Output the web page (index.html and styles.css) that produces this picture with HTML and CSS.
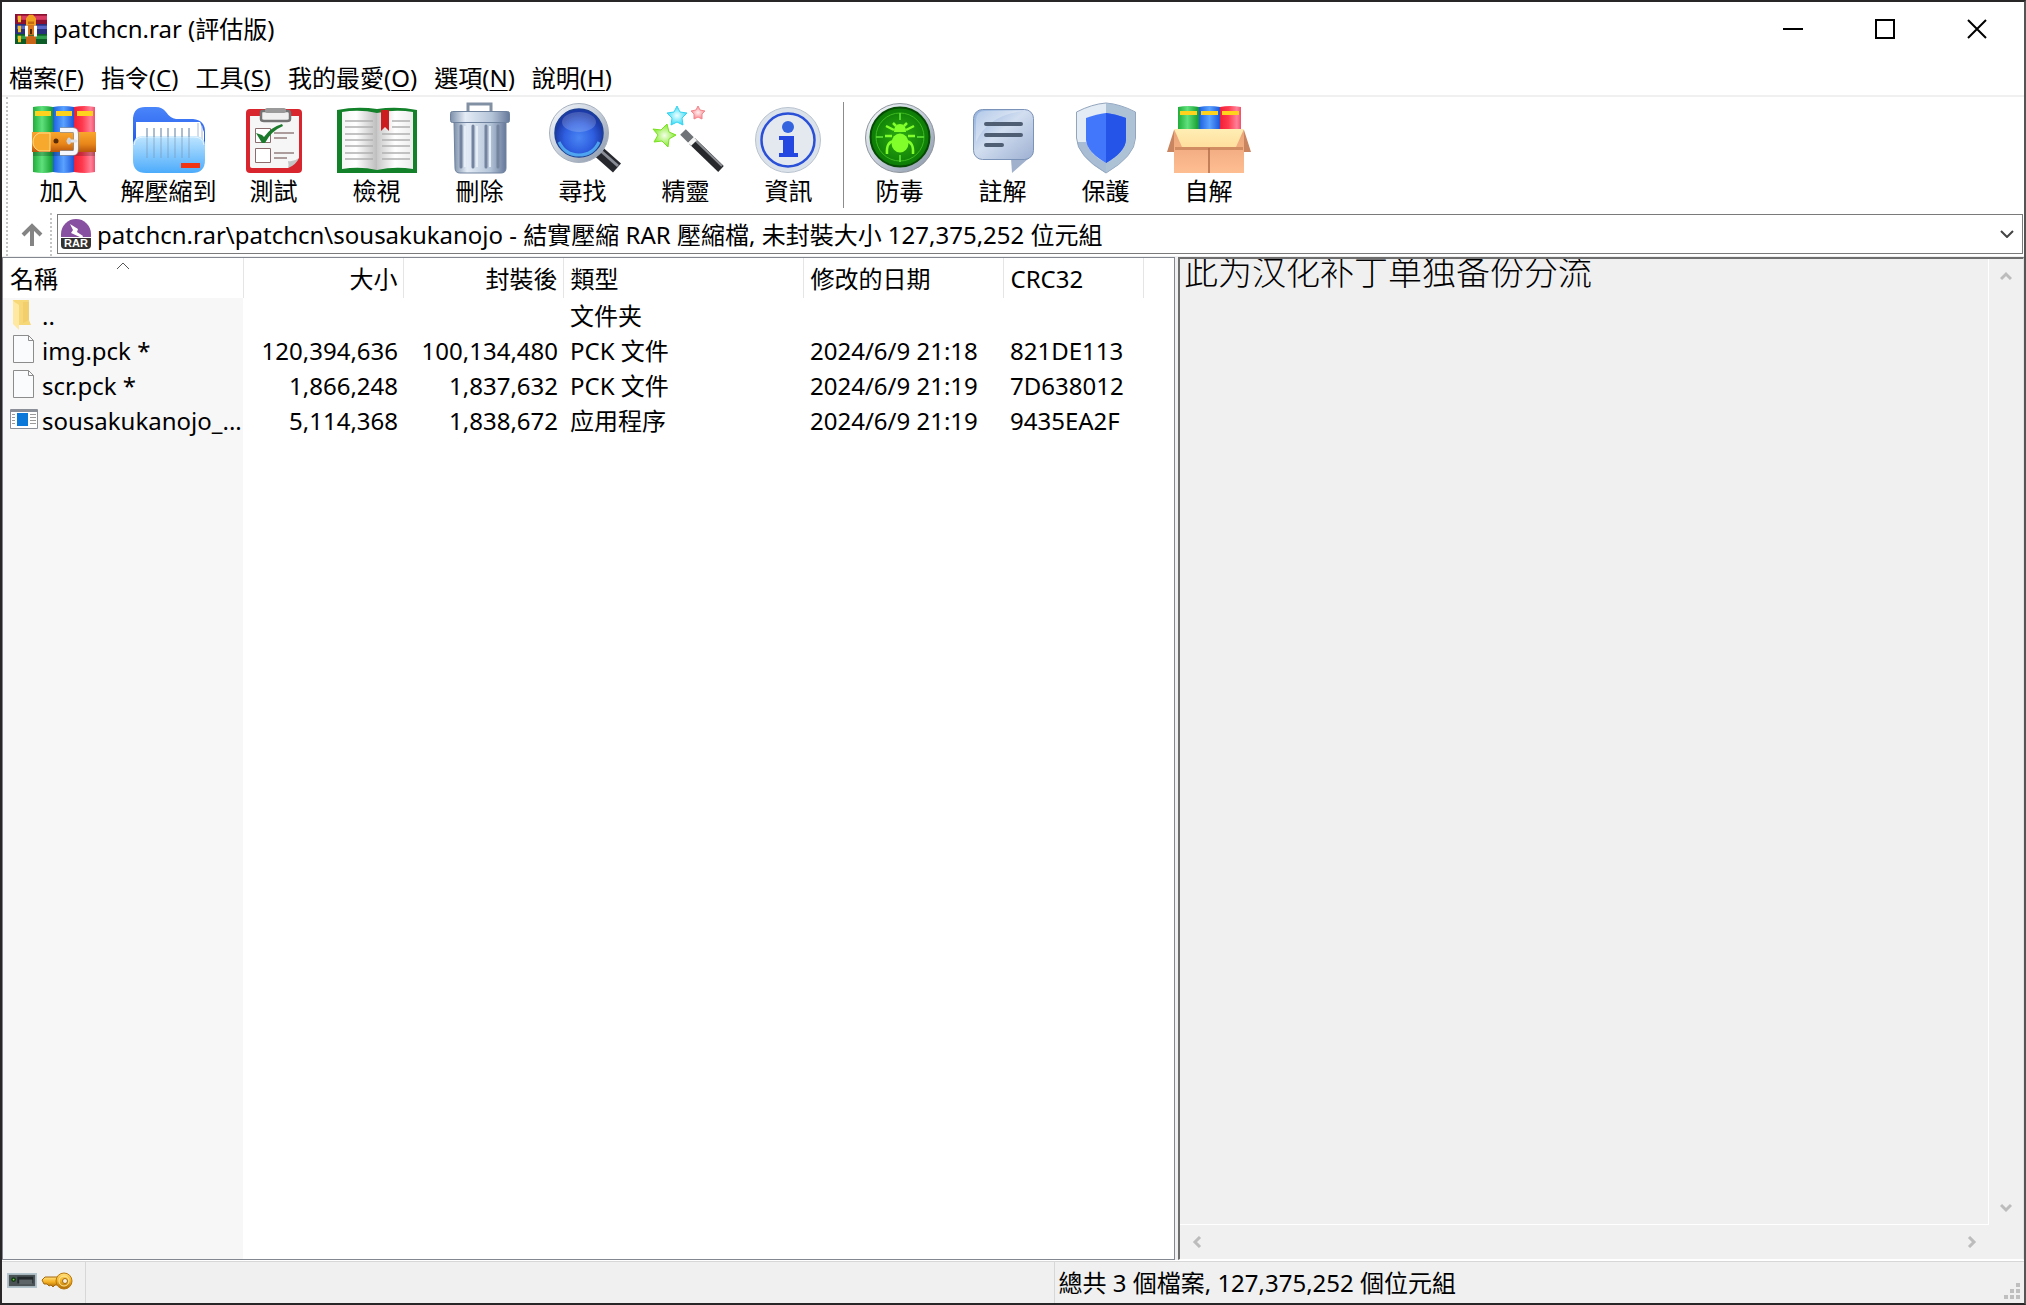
FILE: index.html
```html
<!DOCTYPE html>
<html lang="zh-Hant">
<head>
<meta charset="utf-8">
<title>patchcn.rar (評估版)</title>
<link rel="stylesheet" href="styles.css">
</head>
<body>
<svg class="defs" aria-hidden="true">
  <defs>
    <linearGradient id="green"><stop offset="0" stop-color="#1fae3a"/><stop offset=".45" stop-color="#5fe07c"/><stop offset="1" stop-color="#119a2c"/></linearGradient>
    <linearGradient id="blue"><stop offset="0" stop-color="#1b5fe0"/><stop offset=".5" stop-color="#5aa2ff"/><stop offset="1" stop-color="#1c55d8"/></linearGradient>
    <linearGradient id="red"><stop offset="0" stop-color="#f01f38"/><stop offset=".4" stop-color="#ff3a4e"/><stop offset=".8" stop-color="#ff8098"/><stop offset="1" stop-color="#f0506c"/></linearGradient>
    <linearGradient id="belt" x2="0" y2="1"><stop offset="0" stop-color="#f9a62c"/><stop offset=".6" stop-color="#e8861a"/><stop offset="1" stop-color="#b8560c"/></linearGradient>
    <linearGradient id="back" x2="0" y2="1"><stop offset="0" stop-color="#4a86fa"/><stop offset="1" stop-color="#1a4fe8"/></linearGradient>
    <linearGradient id="front" x2="0" y2="1"><stop offset="0" stop-color="#bfe6ff"/><stop offset="1" stop-color="#4cabfb"/></linearGradient>
    <linearGradient id="metal"><stop offset="0" stop-color="#7d90aa"/><stop offset=".25" stop-color="#e4ecf6"/><stop offset=".7" stop-color="#b4c4d8"/><stop offset="1" stop-color="#66799a"/></linearGradient>
    <linearGradient id="page" x2="1"><stop offset="0" stop-color="#f4f4f4"/><stop offset=".4" stop-color="#ffffff"/><stop offset="1" stop-color="#bdbdbd"/></linearGradient>
    <linearGradient id="page2" x2="1"><stop offset="0" stop-color="#c8c8c8"/><stop offset=".5" stop-color="#ffffff"/><stop offset="1" stop-color="#ececec"/></linearGradient>
    <linearGradient id="steel" x2="1" y2="1"><stop offset="0" stop-color="#fafcff"/><stop offset=".5" stop-color="#c3ccd8"/><stop offset="1" stop-color="#8793a6"/></linearGradient>
    <radialGradient id="lens" cy=".6"><stop offset="0" stop-color="#4a86f4"/><stop offset=".6" stop-color="#2f5fe0"/><stop offset="1" stop-color="#1c3aa8"/></radialGradient>
    <radialGradient id="radar"><stop offset="0" stop-color="#2fae12"/><stop offset="1" stop-color="#0b7a06"/></radialGradient>
    <linearGradient id="bubble" x2="1" y2="1"><stop offset="0" stop-color="#8fb0de"/><stop offset=".45" stop-color="#d2def0"/><stop offset="1" stop-color="#9db0d2"/></linearGradient>
    <linearGradient id="carton" x2="0" y2="1"><stop offset="0" stop-color="#e9a376"/><stop offset="1" stop-color="#ffbd92"/></linearGradient>
    <linearGradient id="flap" x2="0" y2="1"><stop offset="0" stop-color="#ffeeb4"/><stop offset="1" stop-color="#ffdf9e"/></linearGradient>
    <linearGradient id="gold" x2="0" y2="1"><stop offset="0" stop-color="#ffe07a"/><stop offset=".5" stop-color="#f5b021"/><stop offset="1" stop-color="#a86606"/></linearGradient>
    <radialGradient id="gs"><stop offset="0" stop-color="#f4ffe8"/><stop offset="1" stop-color="#84ea2c"/></radialGradient>
    <radialGradient id="cs"><stop offset="0" stop-color="#eeffff"/><stop offset="1" stop-color="#3cdcf6"/></radialGradient>
    <radialGradient id="ps"><stop offset="0" stop-color="#fff0f0"/><stop offset="1" stop-color="#f98a92"/></radialGradient>
  </defs>
</svg>

<header class="titlebar">
  <svg class="app-icon" viewBox="0 0 32 36" preserveAspectRatio="none" aria-hidden="true">
    <path fill="#8c1030" d="M0 0h32v12H0z"/><path fill="#d83a62" d="M2 2h30v5H2z"/>
    <path fill="#28307e" d="M0 12h32v12H0z"/><path fill="#5a66c8" d="M2 14h30v4H2z"/>
    <path fill="#0c5c28" d="M0 24h32v12H0z"/><path fill="#2f9c4c" d="M2 26h30v4H2z"/>
    <path fill="#f0c020" d="M3 2h3v8H3zM3 14h3v8H3zM3 26h3v8H3z"/>
    <path fill="#c86418" d="M11 26h10v10H11z"/>
    <path fill="#f0a020" d="M11 5l3-4h4l3 4v9H11z"/><path fill="#c46a10" d="M13 9h6v3h-6z"/>
    <path fill="#fff" d="M10 14h12v13h-3v-8h-6v8h-3z"/><path fill="#d87420" d="M13 13h6v12h-6z"/><path fill="#4a2808" d="M15 18h2v6h-2z"/>
  </svg>
  <h1 class="title">patchcn.rar (評估版)</h1>
  <div class="window-buttons">
    <button type="button" aria-label="最小化"><svg viewBox="0 0 20 20"><path d="M0 10h20"/></svg></button>
    <button type="button" aria-label="最大化"><svg viewBox="0 0 20 20"><path d="M1 1h18v18H1z"/></svg></button>
    <button type="button" aria-label="關閉"><svg viewBox="0 0 20 20"><path d="M1 1l18 18M19 1L1 19"/></svg></button>
  </div>
</header>

<nav class="menubar">
  <button type="button">檔案(<u>F</u>)</button>
  <button type="button">指令(<u>C</u>)</button>
  <button type="button">工具(<u>S</u>)</button>
  <button type="button">我的最愛(<u>O</u>)</button>
  <button type="button">選項(<u>N</u>)</button>
  <button type="button">說明(<u>H</u>)</button>
</nav>

<div class="rebar">
  <div class="toolbar" role="toolbar">
    <button type="button" class="tool">
      <svg viewBox="0 0 83 72">
        <path fill="url(#green)" d="M11 5q10-2 20 0v65q-10 2-20 0z"/>
        <path fill="url(#blue)" d="M31 5q10-2 21 0v65q-10 2-21 0z"/>
        <path fill="url(#red)" d="M52 5q10-2 21 0v65q-10 2-21 0z"/>
        <path fill="#ffd21e" d="M13 9h16v5H13zM34 9h16v5H34zM55 9h16v5H55z"/>
        <path fill="#000" opacity=".2" d="M11 50h62v4H11z"/>
        <path fill="url(#belt)" d="M10 30h64v20H10z"/>
        <path fill="#f7a92e" stroke="#ffe08a" stroke-width="1" d="M28 31H17q-6 3-6 9t6 9h11z"/>
        <circle cx="34" cy="39" r="2.500" fill="#5a2c06"/>
        <path fill="none" stroke="#8c929c" stroke-width="5.500" d="M38 28h13q3 0 3 4v15q0 4-3 4H38"/>
        <path fill="none" stroke="#f6f7fa" stroke-width="4" d="M38 28h13q3 0 3 4v15q0 4-3 4H38"/>
        <path stroke="#dfe4ec" stroke-width="3" stroke-linecap="round" d="M46 39h8"/><ellipse cx="47" cy="39" rx="2" ry="3.500" fill="#cdd4df"/>
      </svg>
      <span>加入</span>
    </button>
    <button type="button" class="tool wide">
      <svg viewBox="0 0 83 72">
        <path fill="url(#back)" d="M6 16Q7 5 18 5h11q6 0 10 5 4 6 10 7h17q12 1 12 13v20H6z"/>
        <path fill="#fff" d="M9 20h64l4 10v20H9z"/><path fill="none" stroke="#a8bad8" d="M71 21v20M75 24v20"/>
        <path fill="url(#front)" d="M6 44q0-10 10-10h52q10 0 10 10v14q0 13-13 13H19Q6 71 6 58z"/>
        <path fill="none" stroke="#e4f5ff" d="M7 43q1-8 10-8h50q9 0 10 8"/>
        <path stroke="#7790b0" stroke-width="2" opacity=".6" d="M20 26v9M27 26v9M34 26v9M41 26v9M48 26v9M55 26v9M62 26v9"/>
        <path stroke="#7790b0" stroke-width="2" opacity=".3" d="M20 35v21M27 35v21M34 35v21M41 35v21M48 35v21M55 35v21M62 35v21"/>
        <path fill="#f03414" d="M54 61h19v5H54z"/>
      </svg>
      <span>解壓縮到</span>
    </button>
    <button type="button" class="tool">
      <svg viewBox="0 0 83 72">
        <rect x="14" y="7" width="56" height="64" rx="4" fill="#d9262e"/>
        <path fill="#f6f6f6" d="M18 14h49v42l-11 10H20q-2 0-2-2z"/><path fill="#c4c4c4" d="M67 56q-5 4-11 3 1 4 0 7 8-3 11-10z"/>
        <path fill="#f0f0f0" stroke="#747474" stroke-width="2.500" d="M30 9h26q2 0 2 3v5q0 2-3 2H32q-3 0-3-2v-5q0-3 1-3z"/><rect x="33" y="6" width="21" height="5" rx="2" fill="#9a9a9a"/>
        <path fill="#fff" stroke="#8c6c6c" d="M23.500 26.500h15v14h-15zM23.500 46.500h15v14h-15z"/>
        <path stroke="#957f7f" stroke-width="1.300" d="M42 31h20M42 36h13M42 51h20M42 56h13"/>
        <path fill="#1c7a2c" d="M24 31l6 2 2 2q7-10 18-13l1 2q-12 5-18 17h-3z"/>
      </svg>
      <span>測試</span>
    </button>
    <button type="button" class="tool">
      <svg viewBox="0 0 83 72">
        <path fill="#13812a" d="M2 8q20-4 40-1 20-3 40 1v63H2z"/>
        <path fill="url(#page)" d="M7 10q18-3 35 1v57q-17-4-35-1z"/><path fill="url(#page2)" d="M42 11q18-4 36-1v57q-18-3-36 1z"/>
        <path fill="none" stroke="#b0b0b0" stroke-width="1.500" d="M10 19h28M10 25h28M10 32h28M10 38h28M10 44h28M10 51h28M10 57h28M57 19h18M57 25h18M47 32h28M47 38h28M47 44h28M47 51h28M47 57h28"/>
        <path fill="#cc1c20" d="M46 8h8v21l-4-4-4 4z"/>
      </svg>
      <span>檢視</span>
    </button>
    <button type="button" class="tool">
      <svg viewBox="0 0 83 72">
        <path fill="none" stroke="#8290a4" stroke-width="3" d="M30 10V2h23v8"/>
        <path fill="url(#metal)" stroke="#6f829e" d="M16 20h52v46q0 5-5 5H22q-5 0-5-5z"/>
        <path stroke="#74849e" stroke-width="3" stroke-linecap="round" d="M23 24v41M35 24v41M48 24v41M60 24v41"/>
        <path stroke="#e8eef6" stroke-width="2" d="M27 24v41M39 24v41M52 24v41"/>
        <rect x="12.500" y="9.500" width="59" height="11" rx="2" fill="url(#metal)" stroke="#6f829e"/>
      </svg>
      <span>刪除</span>
    </button>
    <button type="button" class="tool">
      <svg viewBox="0 0 83 72">
        <path stroke="#26282e" stroke-width="12" d="M58 50l18 16"/><path stroke="#8a8d96" stroke-width="3" d="M60 49l17 15"/><path stroke="#b8c0cc" stroke-width="9" d="M54 47l4 4"/>
        <circle cx="38" cy="31" r="29.500" fill="url(#steel)" stroke="#a6b0be"/>
        <circle cx="38" cy="31" r="24" fill="url(#lens)" stroke="#1b3f96" stroke-width="1.500"/>
        <ellipse cx="38" cy="20" rx="17" ry="10" fill="#fff" opacity=".18"/>
        <path fill="none" stroke="#60c8ff" stroke-width="3" opacity=".7" d="M18 40q6 13 20 13t20-13"/>
      </svg>
      <span>尋找</span>
    </button>
    <button type="button" class="tool">
      <svg viewBox="0 0 83 72">
        <path fill="url(#gs)" stroke="#78e020" d="M23 22l2 8 7 3-7 4-1 8-6-6-8 1 4-7-5-6 8 1z"/>
        <path fill="url(#cs)" stroke="#34d4f0" d="M33 4l3 6 7 1-5 5 1 7-6-3-6 3 1-7-5-5 7-1z"/>
        <path fill="url(#ps)" stroke="#f4868e" d="M54 4l2 4 5 1-3 3v5l-4-2-4 2v-5l-3-3 5-1z"/>
        <path stroke="#26282b" stroke-width="8" d="M48 39l29 28"/><path stroke="#8b8e92" stroke-width="2" d="M50 37l28 27"/>
        <path stroke="#707377" stroke-width="8" d="M39 30l8 8"/><path stroke="#f4f4f4" stroke-width="8" d="M47 38l3 3"/>
      </svg>
      <span>精靈</span>
    </button>
    <button type="button" class="tool">
      <svg viewBox="0 0 83 72">
        <circle cx="41" cy="38" r="32.500" fill="#dbe2ea" stroke="#b9c3cf"/>
        <circle cx="41" cy="38" r="26.500" fill="#e4e9ef" stroke="#2a50d8" stroke-width="2.500"/>
        <circle cx="41" cy="25" r="6" fill="#3463e0"/>
        <path fill="#2347e0" d="M32 34h15v17h4v4H32v-4h4V38h-4z"/>
      </svg>
      <span>資訊</span>
    </button>
    <span class="tool-separator"></span>
    <button type="button" class="tool">
      <svg viewBox="0 0 83 72">
        <circle cx="42" cy="36" r="34.500" fill="url(#steel)" stroke="#8e959c"/>
        <circle cx="42" cy="35" r="29.500" fill="url(#radar)" stroke="#064a04" stroke-width="2"/>
        <circle cx="42" cy="35" r="24" fill="none" stroke="#3cb81e"/><path stroke="#52d22c" stroke-width="2" d="M42 11v7M42 53v7M18 35h7M59 35h7"/>
        <ellipse cx="42" cy="41" rx="8.500" ry="9.500" fill="#80ff2a"/><path fill="#80ff2a" d="M36 30q0-8 6-8t6 8z"/>
        <path fill="none" stroke="#80ff2a" stroke-width="2.500" d="M36 28l-8-4M48 28l8-4M34 34h-7M50 34h7M36 39q-8 1-7 13M48 39q8 1 7 13M38 24l-3-3M46 24l3-3"/>
      </svg>
      <span>防毒</span>
    </button>
    <button type="button" class="tool">
      <svg viewBox="0 0 83 72">
        <path fill="#9fb1cc" d="M50 56h18L51 71z"/>
        <rect x="12.500" y="7.500" width="60" height="50" rx="9" fill="url(#bubble)" stroke="#7b93b8"/>
        <path fill="#fff" opacity=".3" d="M15 40V18q0-9 9-9h37Q26 14 15 40z"/>
        <path stroke="#505e74" stroke-width="4" stroke-linecap="round" d="M25 22h35M25 33h35M25 43h16"/>
      </svg>
      <span>註解</span>
    </button>
    <button type="button" class="tool">
      <svg viewBox="0 0 83 72">
        <path fill="#e3ebf4" stroke="#93a5bd" d="M42 1q14 1 29.500 9v26Q71 54 42 71 13 54 12.500 36V10Q28 2 42 1z"/>
        <path fill="#9cb4cc" d="M42 1q14 1 29 9v26Q71 54 42 71z" opacity=".75"/><path fill="#8ea8c4" opacity=".7" d="M13 40q5 18 29 31V61Q26 53 22 40z"/>
        <path fill="#4377fb" d="M42 11q9 1 20 5v22q-1 12-20 23Q23 50 22 38V16q11-4 20-5z"/><path fill="#2454e8" d="M42 11q9 1 20 5v22q-1 12-20 23z"/>
      </svg>
      <span>保護</span>
    </button>
    <button type="button" class="tool">
      <svg class="spill" viewBox="0 0 83 72">
        <path fill="url(#green)" d="M11 5q10-2 21 0v24H11z"/><path fill="url(#blue)" d="M32 5q10-2 21 0v24H32z"/><path fill="url(#red)" d="M53 5q10-2 21 0v24H53z"/>
        <path fill="#ffd21e" d="M13 9h17v4H13zM34 9h17v4H34zM55 9h17v4H55z"/>
        <path fill="url(#carton)" d="M7 28h70v43H7z"/><path fill="#c98460" d="M7 28L0 50h7zM77 28l7 22h-7z"/>
        <path fill="#d18c62" d="M8 45h68v3H8z"/><path fill="url(#flap)" d="M7 27h70l-8 18H15z"/><path stroke="#b06c4a" stroke-width="1.500" d="M42 46v25"/>
      </svg>
      <span>自解</span>
    </button>
  </div>

  <div class="address-row">
    <button type="button" class="up" aria-label="上一層"><svg viewBox="0 0 24 24"><path d="M12 23V4M3 12l9-9 9 9"/></svg></button>
    <div class="address">
      <svg class="rar-icon" viewBox="0 0 30 30" aria-hidden="true">
        <path fill="#8850a0" d="M0 18V15a15 15 0 0 1 30 0v3z"/>
        <path fill="#fff" d="M9 5l8 5-1 3 6 4-1 2-11-5 2-3z"/>
        <path fill="#333" d="M0 19h30v7q0 4-4 4H4q-4 0-4-4z"/>
        <text x="15" y="28" text-anchor="middle">RAR</text>
      </svg>
      <select aria-label="路徑"><option>patchcn.rar\patchcn\sousakukanojo - 結實壓縮 RAR 壓縮檔, 未封裝大小 127,375,252 位元組</option></select>
      <svg class="drop" viewBox="0 0 14 8" aria-hidden="true"><path d="M1 1l6 6 6-6"/></svg>
    </div>
  </div>
</div>

<main class="panes">
  <section class="file-list">
    <table>
      <colgroup><col class="c-name"><col class="c-size"><col class="c-size"><col class="c-type"><col class="c-date"><col class="c-crc"><col></colgroup>
      <thead>
        <tr>
          <th>名稱<svg class="sort" viewBox="0 0 14 8" aria-hidden="true"><path d="M1 7l6-6 6 6"/></svg></th>
          <th class="num">大小</th><th class="num">封裝後</th><th>類型</th><th>修改的日期</th><th>CRC32</th><td></td>
        </tr>
      </thead>
      <tbody>
        <tr>
          <td><div class="name"><svg viewBox="0 0 28 32"><path fill="#f7d878" d="M3 1h16v20l2 5H6z"/><path fill="#ffe9a2" d="M3 2l6 4v25l-6-6z"/><path fill="#eec35a" d="M13 3h6v18l-6 3z" opacity=".4"/></svg><span>..</span></div></td>
          <td></td><td></td><td lang="zh-Hans">文件夹</td><td></td><td></td><td></td>
        </tr>
        <tr>
          <td><div class="name"><svg viewBox="0 0 28 32"><path fill="#fafbfc" stroke="#8c8c8c" d="M3.500 1.500h15l5 5v22h-20z"/><path fill="none" stroke="#8c8c8c" d="M18.500 1.500v5h5"/></svg><span>img.pck *</span></div></td>
          <td class="num">120,394,636</td><td class="num">100,134,480</td><td lang="zh-Hans">PCK 文件</td><td>2024/6/9 21:18</td><td>821DE113</td><td></td>
        </tr>
        <tr>
          <td><div class="name"><svg viewBox="0 0 28 32"><path fill="#fafbfc" stroke="#8c8c8c" d="M3.500 1.500h15l5 5v22h-20z"/><path fill="none" stroke="#8c8c8c" d="M18.500 1.500v5h5"/></svg><span>scr.pck *</span></div></td>
          <td class="num">1,866,248</td><td class="num">1,837,632</td><td lang="zh-Hans">PCK 文件</td><td>2024/6/9 21:19</td><td>7D638012</td><td></td>
        </tr>
        <tr>
          <td><div class="name"><svg viewBox="0 0 28 32"><path fill="#fff" stroke="#8a8f98" d="M.5 5.500h27v19H.5z"/><path fill="#8a8f98" d="M1 5h26v3H1z"/><path fill="#0a78d8" d="M7 9h11v13H7z"/><path stroke="#9a9a9a" d="M2 10.500h3M2 13.500h3M2 16.500h3M2 19.500h3M20 10.500h6M20 13.500h6M20 16.500h6M20 19.500h6"/></svg><span>sousakukanojo_...</span></div></td>
          <td class="num">5,114,368</td><td class="num">1,838,672</td><td lang="zh-Hans">应用程序</td><td>2024/6/9 21:19</td><td>9435EA2F</td><td></td>
        </tr>
      </tbody>
    </table>
  </section>

  <section class="comment">
    <textarea readonly aria-label="註解" lang="zh-Hans">此为汉化补丁单独备份分流</textarea>
    <div class="scroll vertical">
      <button type="button" aria-label="向上"><svg viewBox="0 0 12 12"><path d="M1 9l5-5 5 5"/></svg></button>
      <button type="button" aria-label="向下"><svg viewBox="0 0 12 12"><path d="M1 3l5 5 5-5"/></svg></button>
    </div>
    <div class="scroll horizontal">
      <button type="button" aria-label="向左"><svg viewBox="0 0 12 12"><path d="M9 1L4 6l5 5"/></svg></button>
      <button type="button" aria-label="向右"><svg viewBox="0 0 12 12"><path d="M3 1l5 5-5 5"/></svg></button>
    </div>
  </section>
</main>

<footer class="statusbar">
  <div class="status-icons">
    <svg class="drive" viewBox="0 0 32 16" aria-hidden="true"><path fill="#b4c4cc" d="M0 0h32v16H0z"/><path fill="#4a5256" d="M2 2h28v12H2z"/><path fill="#23282b" d="M11 4h17v7H11z"/><path fill="#5c6468" d="M13 7h14v5H13z"/><circle cx="7" cy="7" r="2.500" fill="#123c12"/><circle cx="7" cy="7" r="1" fill="#7ad04a"/></svg>
    <svg class="key" viewBox="0 0 32 18" aria-hidden="true"><path fill="url(#gold)" stroke="#a4690c" d="M1 8l3-3h13v8h-3l-2 2-2-2-2 1-2-2H3z"/><circle cx="23" cy="9" r="8" fill="url(#gold)" stroke="#b9780e"/><circle cx="23" cy="9" r="5" fill="none" stroke="#ffe89a"/><circle cx="24" cy="9" r="2.500" fill="#f4f0e4" stroke="#a4690c"/></svg>
  </div>
  <div class="status-selection"></div>
  <div class="status-total">總共 3 個檔案, 127,375,252 個位元組</div>
  <svg class="grip" viewBox="0 0 16 16" aria-hidden="true"><path fill="#bfbfbf" d="M12 0h4v4h-4zM6 6h4v4H6zM12 6h4v4h-4zM0 12h4v4H0zM6 12h4v4H6zM12 12h4v4h-4z"/></svg>
</footer>
</body>
</html>
```

FILE: styles.css
```css
* { box-sizing: border-box; }

body {
  margin: 0;
  min-height: 100vh;
  display: flex;
  flex-direction: column;
  border: 2px solid #282626;
  border-right-color: #555;
  background: #fff;
  color: #000;
  font: 24px/34px "Noto Sans", "Noto Sans CJK TC", sans-serif;
}

:lang(zh-Hans) { font-family: "Noto Sans", "Noto Sans CJK SC", sans-serif; }

button, select {
  margin: 0;
  padding: 0;
  border: 0;
  background: none;
  color: inherit;
  font: inherit;
}

svg { display: block; flex: none; }
.defs { position: absolute; width: 0; height: 0; }

/* Title bar and menu */
.titlebar { display: flex; align-items: center; height: 54px; padding: 0 1px 0 13px; }
.app-icon { width: 32px; height: 30px; }
.title { flex: 1; margin: 0 0 0 6px; font-size: 24px; font-weight: 400; }
.window-buttons { display: flex; align-self: stretch; }
.window-buttons button { display: grid; place-items: center; width: 92px; }
.window-buttons svg { width: 20px; height: 20px; fill: none; stroke: #000; stroke-width: 2; }

.menubar { display: flex; gap: 17px; height: 41px; padding: 4px 0 0 7px; border-bottom: 2px solid #f0f0f0; }
.menubar u { text-decoration-thickness: 1px; text-underline-offset: 3px; }

/* Toolbar and address bar */
.rebar { margin-left: 4px; border-left: 2px dotted #c4c4c4; }
.toolbar { display: flex; height: 116px; padding: 5px 0 0 4px; }
.tool { display: flex; flex-direction: column; align-items: center; width: 103px; }
.tool.wide { width: 107px; }
.tool svg { width: 83px; height: 72px; }
.tool .spill { overflow: visible; }
.tool-separator { width: 1px; height: 106px; margin: 0 4px 0 3px; background: #8c8c8c; }

.address-row { display: flex; height: 43px; padding-right: 1px; }
.up { display: grid; place-items: center; width: 44px; padding-left: 5px; border-right: 2px dotted #c4c4c4; }
.up svg { width: 24px; height: 24px; fill: none; stroke: #848484; stroke-width: 4; }
.address { flex: 1; display: flex; align-items: center; height: 40px; margin: 1px 0 0 5px; padding: 0 8px 0 3px; border: 1px solid #7a7a7a; }
.rar-icon { width: 30px; height: 30px; }
.rar-icon text { font: 700 11px "Liberation Sans", sans-serif; fill: #fff; }
.address select { flex: 1; min-width: 0; height: 36px; padding: 2px 0 0 6px; appearance: none; }
.drop { width: 14px; height: 8px; fill: none; stroke: #444; stroke-width: 2; }

/* File list and comment */
.panes { flex: 1; display: flex; gap: 3px; padding-top: 1px; background: #f0f0f0; }
.file-list {
  flex: 1174;
  min-width: 0;
  border: 1px solid #828790;
  background: linear-gradient(#f7f7f7, #f7f7f7) no-repeat 0 40px / 240px 100% #fff;
}
.file-list table { width: 100%; table-layout: fixed; border-collapse: collapse; }
.c-name { width: 240px; }
.c-size { width: 160px; }
.c-type { width: 240px; }
.c-date { width: 200px; }
.c-crc { width: 140px; }
th { position: relative; height: 40px; padding: 2px 7px 0; border-right: 1px solid #e5e5e5; font-weight: 400; text-align: left; white-space: nowrap; }
td { height: 35px; padding: 0 7px; white-space: nowrap; }
.num { text-align: right; padding-right: 5px; }
.sort { position: absolute; top: 4px; left: 113px; width: 14px; height: 8px; fill: none; stroke: #555; stroke-width: 1; }
.name { display: flex; gap: 4px; margin-right: -7px; }
.name svg { width: 28px; height: 32px; }

.comment {
  flex: 845;
  display: grid;
  grid-template: 1fr 34px / 1fr 34px;
  min-width: 0;
  border: 2px solid #6e6e6e;
  border-right: 1px solid #e3e3e3;
  border-bottom: 1px solid #fff;
  background: #f0f0f0;
}
.comment textarea {
  min-width: 0;
  padding: 0 4px;
  border: 0;
  border-right: 1px solid #fff;
  border-bottom: 1px solid #fff;
  outline: 0;
  resize: none;
  overflow: hidden;
  background: transparent;
  color: #000;
  font: 300 34px/24px "Noto Sans CJK SC", sans-serif;
}
.scroll { display: flex; justify-content: space-between; }
.scroll.vertical { flex-direction: column; }
.scroll button { display: grid; place-items: center; width: 34px; height: 34px; }
.scroll svg { width: 12px; height: 12px; fill: none; stroke: #bcbcbc; stroke-width: 3; }

/* Status bar */
.statusbar { display: flex; height: 42px; margin-top: 1px; border-top: 1px solid #d7d7d7; background: #f0f0f0; }
.status-icons { display: flex; align-items: center; gap: 4px; width: 84px; padding: 0 0 4px 5px; border-right: 1px solid #d7d7d7; }
.drive { width: 30px; height: 15px; }
.key { width: 32px; height: 18px; }
.status-selection { flex: 968; border-right: 1px solid #d7d7d7; }
.status-total { flex: 946; padding: 4px 0 0 4px; white-space: nowrap; }
.grip { align-self: flex-end; width: 16px; height: 16px; margin: 0 4px 4px 0; }
```
